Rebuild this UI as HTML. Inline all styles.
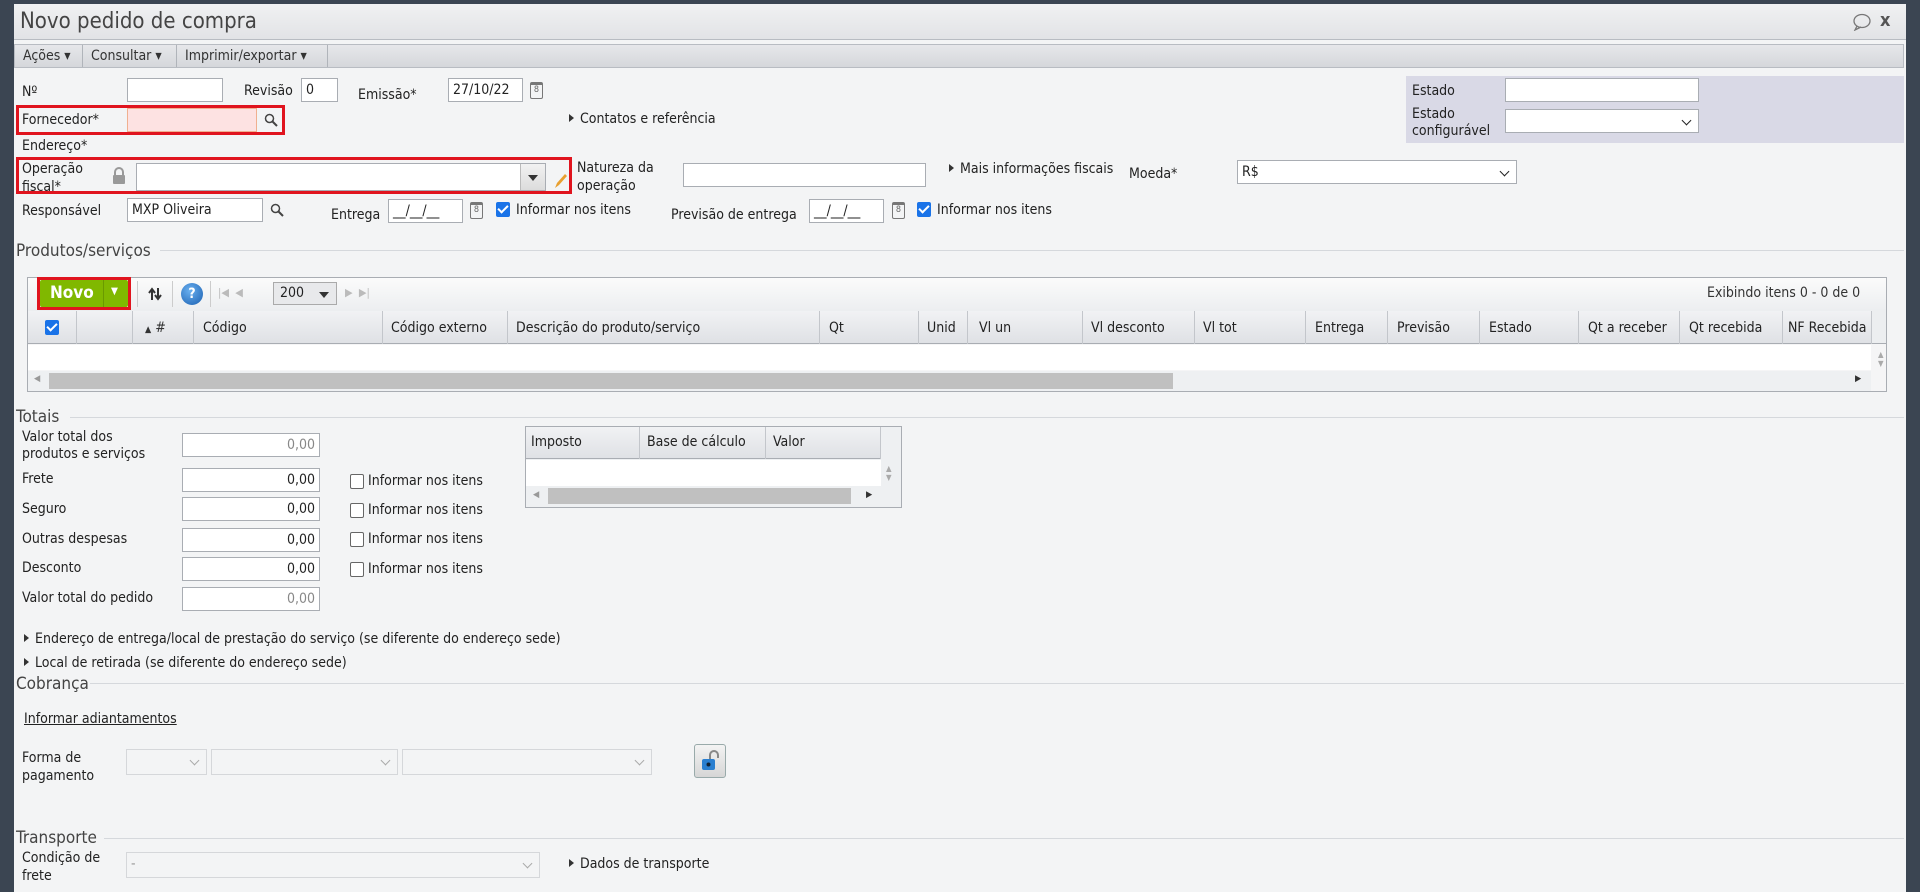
<!DOCTYPE html>
<html><head><meta charset="utf-8"><style>
*{box-sizing:border-box;margin:0;padding:0}
body{width:1920px;height:892px;overflow:hidden;background:#3b4552;font-family:"DejaVu Sans Condensed","Liberation Sans",sans-serif;font-size:14px;color:#222;position:relative}
.a{position:absolute;white-space:nowrap}
#win{position:absolute;left:14px;top:4px;width:1892px;height:888px;background:#f3f4f5}
#title{position:absolute;left:14px;top:4px;width:1892px;height:36px;background:linear-gradient(#f0f1f2,#e2e3e6);border-bottom:1px solid #b8bcc2}
#tb{position:absolute;left:14px;top:44px;width:1890px;height:24px;background:linear-gradient(#e6e7ea,#d5d7db);border:1px solid #b8bcc2}
.tbb{position:absolute;top:0;height:22px;line-height:22px;border-right:1px solid #b0b4ba;padding-left:8px;font-size:14px;color:#333}
.inp{position:absolute;background:#fff;border:1px solid #a9adb3;height:24px;line-height:22px;padding-left:4px;font-size:14px}
.sel::after{content:"";position:absolute;right:8px;top:7px;width:6px;height:6px;border-right:1.5px solid #222;border-bottom:1.5px solid #222;transform:rotate(45deg)}
.dis{background:#f3f4f5;border-color:#d5d7da}
.dis::after{border-color:#aaa}
.red{position:absolute;border:3px solid #e0141e}
.tri{display:inline-block;width:0;height:0;border-left:5px solid #333;border-top:4px solid transparent;border-bottom:4px solid transparent;margin-right:6px;vertical-align:1px}
.leg{position:absolute;font-size:17px;color:#444}
.line{position:absolute;height:1px;background:#d5d8dc}
.cb{position:absolute;width:14px;height:15px;border:1px solid #666;border-radius:2px;background:#fff}
.cbc{position:absolute;width:14px;height:15px;border-radius:2px;background:#1a73e8}
.cbc::after{content:"";position:absolute;left:4px;top:1px;width:4px;height:8px;border-right:2px solid #fff;border-bottom:2px solid #fff;transform:rotate(45deg)}
.num{text-align:right;padding-right:4px}
.hdr{position:absolute;height:33px;background:linear-gradient(#f1f2f4,#dfe1e5);border-bottom:1px solid #a9adb3}
.hs{position:absolute;top:0;width:1px;height:33px;background:#c3c6cb}
.cal{position:absolute;width:13px;height:17px;border:1.5px solid #777;border-top-width:3px;border-radius:2px;font-size:9px;line-height:11px;text-align:center;color:#666}
</style></head><body>
<div id="win"></div>
<div id="title"><div class="a" style="left:6px;top:5px;font-size:22px;color:#444">Novo pedido de compra</div>
<svg class="a" style="left:1838px;top:9px" width="20" height="18"><ellipse cx="10" cy="8" rx="8" ry="6.5" fill="none" stroke="#777" stroke-width="1.3"/><path d="M5 13 L3 17 L9 14" fill="none" stroke="#777" stroke-width="1.3"/></svg>
<div class="a" style="left:1866px;top:6px;font-size:18px;color:#555;font-weight:bold">x</div></div>
<div id="tb">
<div class="tbb" style="left:0;width:68px">Ações ▾</div>
<div class="tbb" style="left:68px;width:94px">Consultar ▾</div>
<div class="tbb" style="left:162px;width:151px">Imprimir/exportar ▾</div>
</div>
<div class="a" style="left:1406px;top:76px;width:498px;height:67px;background:#d9d9e6"></div>
<div class="a" style="left:1412px;top:83px">Estado</div>
<div class="inp" style="left:1505px;top:78px;width:194px"></div>
<div class="a" style="left:1412px;top:106px;line-height:17px">Estado<br>configurável</div>
<div class="inp sel" style="left:1505px;top:109px;width:194px"></div>

<div class="a" style="left:22px;top:84px">Nº</div>
<div class="inp" style="left:127px;top:78px;width:96px"></div>
<div class="a" style="left:244px;top:83px">Revisão</div>
<div class="inp" style="left:301px;top:78px;width:37px">0</div>
<div class="a" style="left:358px;top:87px">Emissão*</div>
<div class="inp" style="left:448px;top:78px;width:75px">27/10/22</div>
<div class="cal" style="left:530px;top:82px">8</div>

<div class="red" style="left:16px;top:105px;width:269px;height:30px"></div>
<div class="a" style="left:22px;top:112px">Fornecedor*</div>
<div class="inp" style="left:127px;top:108px;width:130px;background:#fde2e2;border-color:#f0b090"></div>
<svg class="a" style="left:264px;top:113px" width="14" height="14"><circle cx="5.5" cy="5.5" r="4" fill="none" stroke="#444" stroke-width="1.5"/><path d="M8.5 8.5 L13 13" stroke="#444" stroke-width="2"/></svg>
<div class="a" style="left:569px;top:111px"><span class="tri"></span>Contatos e referência</div>
<div class="a" style="left:22px;top:138px">Endereço*</div>

<div class="red" style="left:16px;top:157px;width:556px;height:37px"></div>
<div class="a" style="left:22px;top:160px;line-height:18px">Operação<br>fiscal*</div>
<svg class="a" style="left:112px;top:167px" width="14" height="17"><path d="M3 8 V5 a4 4 0 0 1 8 0 V8" fill="none" stroke="#999" stroke-width="2"/><rect x="1" y="8" width="12" height="9" rx="1" fill="#999"/></svg>
<div class="inp" style="left:136px;top:163px;width:410px;height:28px"></div>
<div class="a" style="left:520px;top:164px;width:25px;height:26px;background:linear-gradient(#f2f2f2,#dcdcdc);border-left:1px solid #bbb"></div>
<div class="a" style="left:528px;top:175px;border-left:5px solid transparent;border-right:5px solid transparent;border-top:6px solid #333"></div>
<svg class="a" style="left:552px;top:172px" width="16" height="18"><path d="M3 16 L5 11 L13 2 L15 4 L7 13 Z" fill="#e8a030"/></svg>
<div class="a" style="left:577px;top:159px;line-height:18px">Natureza da<br>operação</div>
<div class="inp" style="left:683px;top:163px;width:243px"></div>
<div class="a" style="left:949px;top:161px"><span class="tri"></span>Mais informações fiscais</div>
<div class="a" style="left:1129px;top:166px">Moeda*</div>
<div class="inp sel" style="left:1237px;top:160px;width:280px">R$</div>

<div class="a" style="left:22px;top:203px">Responsável</div>
<div class="inp" style="left:127px;top:198px;width:136px">MXP Oliveira</div>
<svg class="a" style="left:270px;top:203px" width="14" height="14"><circle cx="5.5" cy="5.5" r="4" fill="none" stroke="#444" stroke-width="1.5"/><path d="M8.5 8.5 L13 13" stroke="#444" stroke-width="2"/></svg>
<div class="a" style="left:331px;top:207px">Entrega</div>
<div class="inp" style="left:388px;top:199px;width:75px">__/__/__</div>
<div class="cal" style="left:470px;top:202px">8</div>
<div class="cbc" style="left:496px;top:202px"></div>
<div class="a" style="left:516px;top:202px">Informar nos itens</div>
<div class="a" style="left:671px;top:207px">Previsão de entrega</div>
<div class="inp" style="left:809px;top:199px;width:75px">__/__/__</div>
<div class="cal" style="left:892px;top:202px">8</div>
<div class="cbc" style="left:917px;top:202px"></div>
<div class="a" style="left:937px;top:202px">Informar nos itens</div>

<div class="line" style="left:160px;top:250px;width:1744px"></div>
<div class="leg" style="left:16px;top:241px">Produtos/serviços</div>
<div class="a" style="left:27px;top:277px;width:1860px;height:115px;border:1px solid #a9adb3;background:#f5f5f6"></div>
<div class="a" style="left:28px;top:278px;width:1858px;height:33px;background:linear-gradient(#fbfbfb,#eceef0)"></div>
<div class="red" style="left:37px;top:277px;width:94px;height:33px"></div>
<div class="a" style="left:40px;top:280px;width:88px;height:27px;background:#80b800;border-radius:2px"></div>
<div class="a" style="left:50px;top:283px;color:#fff;font-weight:bold;font-size:17px">Novo</div>
<div class="a" style="left:103px;top:280px;width:1px;height:27px;background:#6a9a00"></div>
<div class="a" style="left:111px;top:286px;color:#fff;font-size:10px">▼</div>
<div class="a" style="left:137px;top:281px;width:1px;height:26px;background:#ccc"></div>
<svg class="a" style="left:146px;top:286px" width="18" height="16"><path d="M6 14 V4 M3 7 L6 3 L9 7" fill="none" stroke="#333" stroke-width="2"/><path d="M12 2 V12 M9 9 L12 13 L15 9" fill="none" stroke="#333" stroke-width="2"/></svg>
<div class="a" style="left:172px;top:281px;width:1px;height:26px;background:#ccc"></div>
<div class="a" style="left:181px;top:283px;width:22px;height:22px;border-radius:50%;background:radial-gradient(circle at 40% 35%,#6ab0f0,#1a5fb0);color:#fff;font-weight:bold;text-align:center;line-height:22px;font-size:14px">?</div>
<div class="a" style="left:210px;top:281px;width:1px;height:26px;background:#ccc"></div>
<div class="a" style="left:218px;top:286px;color:#bbb;font-size:11px">|◀ &nbsp;◀</div>
<div class="a" style="left:273px;top:282px;width:64px;height:23px;border:1px solid #aaa;background:#e8e9eb;padding-left:6px;line-height:21px">200</div>
<div class="a" style="left:319px;top:292px;border-left:5px solid transparent;border-right:5px solid transparent;border-top:6px solid #333"></div>
<div class="a" style="left:345px;top:286px;color:#bbb;font-size:11px">▶ &nbsp;▶|</div>
<div class="a" style="left:1707px;top:285px;color:#333">Exibindo itens 0 - 0 de 0</div>
<div class="hdr" style="left:28px;top:311px;width:1843px"></div>
<div class="a" style="left:1871px;top:311px;width:15px;height:33px;background:#eceef0;border-bottom:1px solid #a9adb3"></div>
<div class="hs" style="left:76px;top:311px"></div><div class="hs" style="left:132px;top:311px"></div><div class="hs" style="left:193px;top:311px"></div><div class="hs" style="left:382px;top:311px"></div><div class="hs" style="left:507px;top:311px"></div><div class="hs" style="left:819px;top:311px"></div><div class="hs" style="left:918px;top:311px"></div><div class="hs" style="left:967px;top:311px"></div><div class="hs" style="left:1082px;top:311px"></div><div class="hs" style="left:1194px;top:311px"></div><div class="hs" style="left:1305px;top:311px"></div><div class="hs" style="left:1387px;top:311px"></div><div class="hs" style="left:1479px;top:311px"></div><div class="hs" style="left:1578px;top:311px"></div><div class="hs" style="left:1679px;top:311px"></div><div class="hs" style="left:1782px;top:311px"></div><div class="hs" style="left:1871px;top:311px"></div>
<div class="cbc" style="left:45px;top:320px"></div>
<div class="a" style="left:145px;top:320px;color:#333"><span style="font-size:9px">▲</span> #</div>
<div class="a" style="left:203px;top:320px">Código</div>
<div class="a" style="left:391px;top:320px">Código externo</div>
<div class="a" style="left:516px;top:320px">Descrição do produto/serviço</div>
<div class="a" style="left:829px;top:320px">Qt</div>
<div class="a" style="left:927px;top:320px">Unid</div>
<div class="a" style="left:979px;top:320px">Vl un</div>
<div class="a" style="left:1091px;top:320px">Vl desconto</div>
<div class="a" style="left:1203px;top:320px">Vl tot</div>
<div class="a" style="left:1315px;top:320px">Entrega</div>
<div class="a" style="left:1397px;top:320px">Previsão</div>
<div class="a" style="left:1489px;top:320px">Estado</div>
<div class="a" style="left:1588px;top:320px">Qt a receber</div>
<div class="a" style="left:1689px;top:320px">Qt recebida</div>
<div class="a" style="left:1788px;top:320px">NF Recebida</div>
<div class="a" style="left:28px;top:345px;width:1843px;height:25px;background:#fff"></div>
<div class="a" style="left:1878px;top:350px;color:#aaa;font-size:8px;line-height:9px">▲<br>▼</div>
<div class="a" style="left:28px;top:371px;width:1843px;height:20px;background:#eef0f2"></div>
<div class="a" style="left:49px;top:373px;width:1124px;height:16px;background:#c0c0c0"></div>
<div class="a" style="left:34px;top:374px;color:#999;font-size:9px">◀</div>
<div class="a" style="left:1855px;top:374px;color:#333;font-size:9px">▶</div>

<div class="line" style="left:70px;top:417px;width:1834px"></div>
<div class="leg" style="left:16px;top:407px">Totais</div>
<div class="a" style="left:22px;top:429px;line-height:17px">Valor total dos<br>produtos e serviços</div>
<div class="inp num" style="left:182px;top:433px;width:138px;color:#888">0,00</div>
<div class="a" style="left:22px;top:471px">Frete</div>
<div class="inp num" style="left:182px;top:468px;width:138px">0,00</div>
<div class="a" style="left:22px;top:501px">Seguro</div>
<div class="inp num" style="left:182px;top:497px;width:138px">0,00</div>
<div class="a" style="left:22px;top:531px">Outras despesas</div>
<div class="inp num" style="left:182px;top:528px;width:138px">0,00</div>
<div class="a" style="left:22px;top:560px">Desconto</div>
<div class="inp num" style="left:182px;top:557px;width:138px">0,00</div>
<div class="a" style="left:22px;top:590px">Valor total do pedido</div>
<div class="inp num" style="left:182px;top:587px;width:138px;color:#888">0,00</div>
<div class="cb" style="left:350px;top:474px"></div><div class="a" style="left:368px;top:473px">Informar nos itens</div>
<div class="cb" style="left:350px;top:503px"></div><div class="a" style="left:368px;top:502px">Informar nos itens</div>
<div class="cb" style="left:350px;top:532px"></div><div class="a" style="left:368px;top:531px">Informar nos itens</div>
<div class="cb" style="left:350px;top:562px"></div><div class="a" style="left:368px;top:561px">Informar nos itens</div>
<div class="a" style="left:525px;top:426px;width:377px;height:82px;border:1px solid #a9adb3;background:#eef0f2"></div>
<div class="hdr" style="left:526px;top:427px;width:355px;height:32px"></div>
<div class="hs" style="left:639px;top:427px;height:32px"></div><div class="hs" style="left:765px;top:427px;height:32px"></div><div class="hs" style="left:880px;top:427px;height:32px"></div>
<div class="a" style="left:531px;top:434px">Imposto</div>
<div class="a" style="left:647px;top:434px">Base de cálculo</div>
<div class="a" style="left:773px;top:434px">Valor</div>
<div class="a" style="left:526px;top:460px;width:355px;height:26px;background:#fff"></div>
<div class="a" style="left:548px;top:488px;width:303px;height:16px;background:#c0c0c0"></div>
<div class="a" style="left:533px;top:490px;color:#999;font-size:9px">◀</div>
<div class="a" style="left:866px;top:490px;color:#333;font-size:9px">▶</div>
<div class="a" style="left:886px;top:464px;color:#aaa;font-size:8px;line-height:9px">▲<br>▼</div>

<div class="a" style="left:24px;top:631px"><span class="tri"></span>Endereço de entrega/local de prestação do serviço (se diferente do endereço sede)</div>
<div class="a" style="left:24px;top:655px"><span class="tri"></span>Local de retirada (se diferente do endereço sede)</div>
<div class="line" style="left:90px;top:683px;width:1814px"></div>
<div class="leg" style="left:16px;top:674px">Cobrança</div>
<div class="a" style="left:24px;top:711px;text-decoration:underline">Informar adiantamentos</div>
<div class="a" style="left:22px;top:749px;line-height:18px">Forma de<br>pagamento</div>
<div class="inp sel dis" style="left:126px;top:749px;width:81px;height:26px"></div>
<div class="inp sel dis" style="left:211px;top:749px;width:187px;height:26px"></div>
<div class="inp sel dis" style="left:402px;top:749px;width:250px;height:26px"></div>
<div class="a" style="left:694px;top:744px;width:32px;height:34px;border:1px solid #9aa;border-radius:3px;background:linear-gradient(#f3f3f3,#d6d6d6)"></div>
<svg class="a" style="left:700px;top:750px" width="20" height="22"><path d="M10 9 V5 a4 4 0 0 1 8 0 V8" fill="none" stroke="#888" stroke-width="2"/><rect x="2" y="9" width="13" height="11" rx="2" fill="#2a7fd0"/><circle cx="8.5" cy="14.5" r="2" fill="#123"/></svg>
<div class="line" style="left:104px;top:838px;width:1800px"></div>
<div class="leg" style="left:16px;top:828px">Transporte</div>
<div class="a" style="left:22px;top:849px;line-height:18px">Condição de<br>frete</div>
<div class="inp sel dis" style="left:126px;top:852px;width:414px;height:26px;color:#999">-</div>
<div class="a" style="left:569px;top:856px"><span class="tri"></span>Dados de transporte</div>
</body></html>
